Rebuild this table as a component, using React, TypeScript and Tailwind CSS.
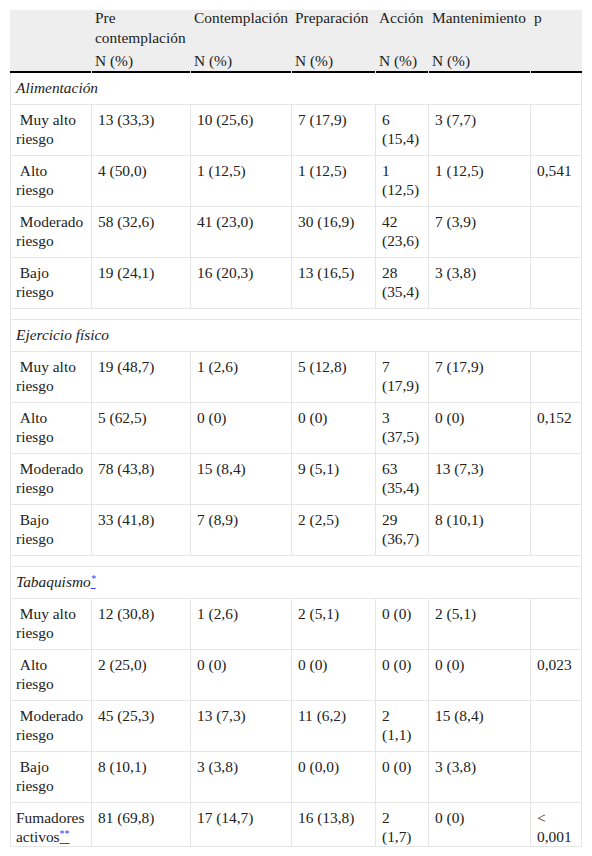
type Row = {
  label: string
  values: string[]
  p?: string
  indent?: boolean
  note?: string
}

type Section = {
  title: string
  note?: string
  rows: Row[]
}

const sections: Section[] = [
  {
    title: 'Alimentación',
    rows: [
      { label: 'Muy alto riesgo', values: ['13 (33,3)', '10 (25,6)', '7 (17,9)', '6 (15,4)', '3 (7,7)'], indent: true },
      { label: 'Alto riesgo', values: ['4 (50,0)', '1 (12,5)', '1 (12,5)', '1 (12,5)', '1 (12,5)'], p: '0,541', indent: true },
      { label: 'Moderado riesgo', values: ['58 (32,6)', '41 (23,0)', '30 (16,9)', '42 (23,6)', '7 (3,9)'], indent: true },
      { label: 'Bajo riesgo', values: ['19 (24,1)', '16 (20,3)', '13 (16,5)', '28 (35,4)', '3 (3,8)'], indent: true },
    ],
  },
  {
    title: 'Ejercicio físico',
    rows: [
      { label: 'Muy alto riesgo', values: ['19 (48,7)', '1 (2,6)', '5 (12,8)', '7 (17,9)', '7 (17,9)'], indent: true },
      { label: 'Alto riesgo', values: ['5 (62,5)', '0 (0)', '0 (0)', '3 (37,5)', '0 (0)'], p: '0,152', indent: true },
      { label: 'Moderado riesgo', values: ['78 (43,8)', '15 (8,4)', '9 (5,1)', '63 (35,4)', '13 (7,3)'], indent: true },
      { label: 'Bajo riesgo', values: ['33 (41,8)', '7 (8,9)', '2 (2,5)', '29 (36,7)', '8 (10,1)'], indent: true },
    ],
  },
  {
    title: 'Tabaquismo',
    note: '*',
    rows: [
      { label: 'Muy alto riesgo', values: ['12 (30,8)', '1 (2,6)', '2 (5,1)', '0 (0)', '2 (5,1)'], indent: true },
      { label: 'Alto riesgo', values: ['2 (25,0)', '0 (0)', '0 (0)', '0 (0)', '0 (0)'], p: '0,023', indent: true },
      { label: 'Moderado riesgo', values: ['45 (25,3)', '13 (7,3)', '11 (6,2)', '2 (1,1)', '15 (8,4)'], indent: true },
      { label: 'Bajo riesgo', values: ['8 (10,1)', '3 (3,8)', '0 (0,0)', '0 (0)', '3 (3,8)'], indent: true },
      { label: 'Fumadores activos', values: ['81 (69,8)', '17 (14,7)', '16 (13,8)', '2 (1,7)', '0 (0)'], p: '< 0,001', note: '**' },
    ],
  },
]

const stages = ['Pre contemplación', 'Contemplación', 'Preparación', 'Acción', 'Mantenimiento']

function Note({ mark }: { mark: string }) {
  return (
    <a href="#" className="text-[#3b3bff] underline">
      <sup className="text-[10px]">{mark}</sup>
    </a>
  )
}

const cell = 'border-r border-b border-[#e6e6e6] px-[6px] pt-[5px] align-top'

export default function App() {
  return (
    <div className="bg-white p-[10px] text-[#222]">
      <table className="w-[572px] table-fixed border-separate border-spacing-0 font-['Liberation_Serif','Times_New_Roman','DejaVu_Serif',serif] text-[15.4px] leading-[19px]">
        <colgroup>
          <col className="w-[82px]" />
          <col className="w-[99px]" />
          <col className="w-[101px]" />
          <col className="w-[84px]" />
          <col className="w-[53px]" />
          <col className="w-[102px]" />
          <col className="w-[51px]" />
        </colgroup>
        <thead className="bg-[#eeeeee]">
          <tr>
            <th className="h-[40px] px-[3px] text-left align-top font-normal" />
            {stages.map((s) => (
              <th key={s} className="px-[3px] text-left align-top font-normal">
                <div className="-mt-[2px] leading-[20px]">{s}</div>
              </th>
            ))}
            <th className="px-[3px] text-left align-top font-normal">
              <div className="-mt-[2px] leading-[20px]">p</div>
            </th>
          </tr>
          <tr>
            {['', 'N (%)', 'N (%)', 'N (%)', 'N (%)', 'N (%)', ''].map((t, i) => (
              <th key={i} className="p-0 text-left align-bottom font-normal">
                <div className="h-[21px] px-[3px] pt-px">{t}</div>
                <div className={i === 6 ? 'h-[2px] bg-black' : 'mr-px h-[2px] bg-black'} />
              </th>
            ))}
          </tr>
        </thead>
        <tbody>
          {sections.map((section, si) => (
            <SectionRows key={section.title} section={section} spacer={si > 0} />
          ))}
        </tbody>
      </table>
    </div>
  )
}

function SectionRows({ section, spacer }: { section: Section; spacer: boolean }) {
  return (
    <>
      {spacer ? (
        <tr>
          <td colSpan={7} className="h-[11px] border-x border-b border-[#e6e6e6]" />
        </tr>
      ) : null}
      <tr>
        <td colSpan={7} className={`${cell} h-[32px] border-l italic !pl-[5px]`}>
          {section.title}
          {section.note ? <Note mark={section.note} /> : null}
        </td>
      </tr>
      {section.rows.map((row) => (
        <tr key={row.label}>
          <td className={`${cell} border-l !pl-[5px] !pr-[3px] ${row.note ? 'h-[43px]' : 'h-[51px]'}`}>
            {row.indent ? '\u00a0' : ''}
            {row.label}
            {row.note ? <Note mark={row.note} /> : null}
          </td>
          {row.values.map((v, i) => (
            <td key={i} className={cell}>
              {v}
            </td>
          ))}
          <td className={cell}>{row.p ?? ''}</td>
        </tr>
      ))}
    </>
  )
}
